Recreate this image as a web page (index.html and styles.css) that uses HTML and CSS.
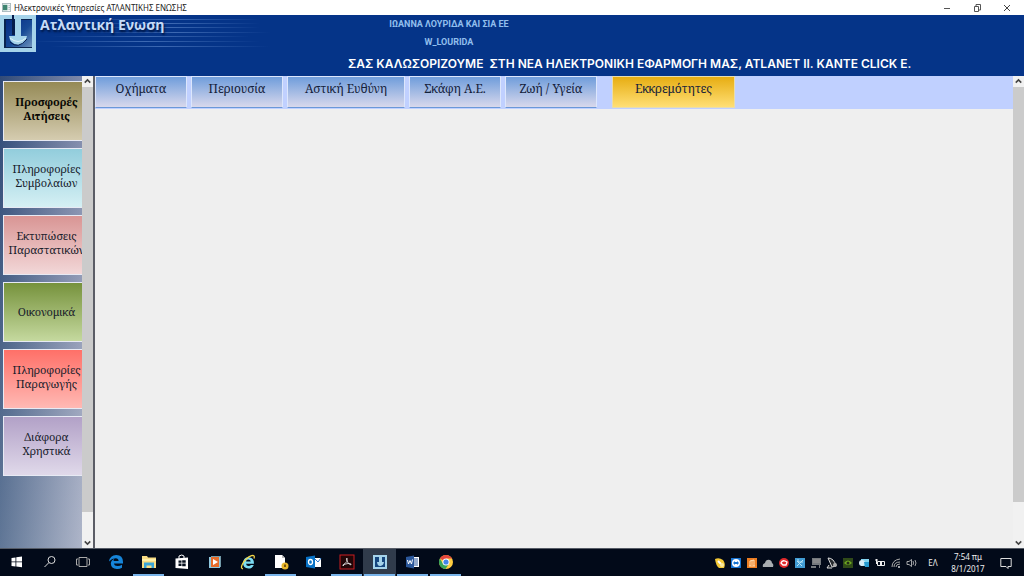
FILE: index.html
```html
<!DOCTYPE html>
<html lang="el">
<head>
<meta charset="utf-8">
<title>Ηλεκτρονικές Υπηρεσίες ΑΤΛΑΝΤΙΚΗΣ ΕΝΩΣΗΣ</title>
<link rel="stylesheet" href="styles.css">
</head>
<body>
<div class="titlebar">
  <svg class="app-icon" viewBox="0 0 10 10"><rect x=".5" y=".5" width="9" height="9" fill="#f4f8f8" stroke="#a9b9bd"/><rect x="1" y="2" width="5" height="6" fill="#3f8571"/><path d="M7 3h2M7 5h2M7 7h2" stroke="#a9b9bd"/></svg>
  <span class="window-title">Ηλεκτρονικές Υπηρεσίες ΑΤΛΑΝΤΙΚΗΣ ΕΝΩΣΗΣ</span>
  <button class="win-btn" aria-label="Ελαχιστοποίηση"><svg viewBox="0 0 10 10"><path d="M2 5.500h6" stroke="#555"/></svg></button>
  <button class="win-btn" aria-label="Επαναφορά"><svg viewBox="0 0 10 10"><path d="M2.500 3.500h4v5h-4zM4 3V1.500h4.500V7H7" fill="none" stroke="#555"/></svg></button>
  <button class="win-btn" aria-label="Κλείσιμο"><svg viewBox="0 0 10 10"><path d="M2 2l6 6M8 2l-6 6" stroke="#444"/></svg></button>
</div>

<header class="header">
  <div class="brand">
    <svg class="logo" viewBox="0 0 36 37">
      <defs><linearGradient id="lg" x1="0" y1="0" x2="1" y2="1"><stop offset="0" stop-color="#062b83"/><stop offset=".55" stop-color="#174a96"/><stop offset="1" stop-color="#6e93bd"/></linearGradient></defs>
      <rect width="36" height="37" fill="#a5d3ea"/>
      <rect x="4" y="4" width="28" height="29" fill="#0a2450"/>
      <rect x="6" y="5" width="26" height="27" fill="url(#lg)"/>
      <path d="M12 0h3v20h-3z" fill="#061c4c"/>
      <path d="M14 0h9v4h-2v17h6q-1 8-9 9-8-1-9-9h6V4h-1z" fill="#a5d3ea"/>
      <path d="M10 23q8 7 16 0" stroke="#dff3fa" fill="none"/>
      <path d="M10 27q8 8 17-3" stroke="#061c4c" fill="none"/>
    </svg>
    <span class="brand-name">Ατλαντική Ενωση</span>
    <svg class="streaks" viewBox="0 0 260 36" preserveAspectRatio="none">
      <defs><linearGradient id="st"><stop offset="0" stop-color="#547fc4" stop-opacity="0"/><stop offset=".5" stop-color="#547fc4" stop-opacity=".7"/><stop offset="1" stop-color="#547fc4" stop-opacity="0"/></linearGradient></defs>
      <g fill="url(#st)"><rect x="70" y="4" width="180" height="1"/><rect x="70" y="8" width="180" height="1"/><rect x="70" y="12" width="180" height="1"/><rect x="70" y="17" width="190" height="1"/><rect x="40" y="21" width="200" height="1"/><rect x="20" y="26" width="230" height="1"/><rect x="40" y="31" width="220" height="1"/></g>
    </svg>
  </div>
  <div class="welcome">
    <div class="account"><p>ΙΩΑΝΝΑ ΛΟΥΡΙΔΑ ΚΑΙ ΣΙΑ ΕΕ</p><p>W_LOURIDA</p></div>
    <p class="ticker">ΣΑΣ ΚΑΛΩΣΟΡΙΖΟΥΜΕ&nbsp; ΣΤΗ ΝΕΑ ΗΛΕΚΤΡΟΝΙΚΗ ΕΦΑΡΜΟΓΗ ΜΑΣ, ATLANET II. ΚΑΝΤΕ CLICK Ε.</p>
  </div>
</header>

<div class="workspace">
  <nav class="sidebar">
    <div class="side-list">
      <button class="side-btn khaki">Προσφορές<br>Αιτήσεις</button>
      <button class="side-btn cyan">Πληροφορίες<br>Συμβολαίων</button>
      <button class="side-btn rose">Εκτυπώσεις<br>Παραστατικών</button>
      <button class="side-btn green">Οικονομικά</button>
      <button class="side-btn red">Πληροφορίες<br>Παραγωγής</button>
      <button class="side-btn violet">Διάφορα<br>Χρηστικά</button>
    </div>
    <div class="scrollbar">
      <svg viewBox="0 0 10 10"><path d="M2.500 6L5 3.500 7.500 6" /></svg>
      <div class="thumb side-thumb"></div>
      <svg viewBox="0 0 10 10"><path d="M2.500 4L5 6.500 7.500 4" /></svg>
    </div>
  </nav>
  <main class="content">
    <div class="tabs">
      <button class="tab">Οχήματα</button>
      <button class="tab">Περιουσία</button>
      <button class="tab wide">Αστική Ευθύνη</button>
      <button class="tab">Σκάφη Α.Ε.</button>
      <button class="tab">Ζωή / Υγεία</button>
      <button class="tab pending">Εκκρεμότητες</button>
    </div>
  </main>
  <div class="scrollbar">
    <svg viewBox="0 0 10 10"><path d="M2.500 6L5 3.500 7.500 6" /></svg>
    <div class="thumb page-thumb"></div>
    <svg viewBox="0 0 10 10"><path d="M2.500 4L5 6.500 7.500 4" /></svg>
  </div>
</div>

<footer class="taskbar">
  <button class="task" aria-label="Έναρξη"><svg viewBox="0 0 16 16"><path d="M2.500 4l4-.6v4.100h-4zM7.300 3.300L13 2.500v5H7.300zM2.500 8.300h4v4.200l-4-.6zM7.300 8.300H13v5l-5.700-.8z" fill="#fff"/></svg></button>
  <button class="task" aria-label="Αναζήτηση"><svg viewBox="0 0 16 16"><circle cx="9.500" cy="6" r="3.500" fill="none" stroke="#ddd"/><path d="M7 8.500L2.500 13" stroke="#ddd"/></svg></button>
  <button class="task" aria-label="Προβολή εργασιών"><svg viewBox="0 0 16 16"><path d="M4 3.500h8v9H4zM3 5H1.500v6H3M13 5h1.500v6H13" fill="none" stroke="#aaa"/></svg></button>
  <button class="task" aria-label="Edge"><svg viewBox="0 0 16 16"><path d="M1 7.500Q2 1 8.200 1 15 1.200 15 8v1.500H6q.3 2.500 3.700 2.500 2.200 0 4.300-1.200v3Q11.500 15.200 8.800 15 3 14.500 2.800 9.500 3 6.300 6.200 4.700 5.500 5.600 5.600 7h5Q10.400 4.200 7.800 4.200 4 4.200 1 7.500z" fill="#1685d9"/></svg></button>
  <button class="task open" aria-label="Εξερεύνηση"><svg viewBox="0 0 16 16"><path d="M1 2h5l1 1.500h8V14H1z" fill="#f8dc83"/><path d="M1 5h14v2H1z" fill="#fff0a9"/><path d="M3 14V8.500h10V14h-2.500v-2.500h-5V14z" fill="#3aa5d8"/></svg></button>
  <button class="task" aria-label="Store"><svg viewBox="0 0 16 16"><path d="M1.500 4.500L14 3.500V15L1.500 14z" fill="#fff"/><path d="M5 5V2q3-2 5 0v3" fill="none" stroke="#fff"/><path d="M4.500 6.500h3v2.300h-3zM8.200 6.300h3.500v2.500H8.200zM4.500 9.500h3V12h-3zM8.200 9.500h3.500v2.700H8.200z" fill="#06101e"/></svg></button>
  <button class="task" aria-label="Media Player"><svg viewBox="0 0 16 16"><rect x="4" y="2" width="10" height="11" fill="#739ba9"/><rect x="2" y="3" width="11" height="11" fill="#8fc8df"/><rect x="4" y="3" width="8" height="10" fill="#e56c2b"/><path d="M6 5l5 3-5 3z" fill="#fff"/></svg></button>
  <button class="task" aria-label="Internet Explorer"><svg viewBox="0 0 16 16"><path d="M14 9.800H6q.3 2.200 2.700 2.200 1.500 0 2.200-1.100h2.900Q12.300 14.500 8.500 14.500 3 14.300 3 8.800 3.400 3.200 8.500 3.200q5.700.2 5.500 6.600zM6 7.400h4.800Q10.500 5.600 8.300 5.600T6 7.400z" fill="#7bdcf3"/><path d="M3 14.800Q.2 14.500 2.500 10 6 3.800 11.500 1.700q3.800-1 2.500 2.800" fill="none" stroke="#f3d548" stroke-width="1.300"/></svg></button>
  <button class="task open" aria-label="Έγγραφο"><svg viewBox="0 0 16 16"><path d="M2 1h7l3 3v10H2z" fill="#fff"/><path d="M9 1v3h3" fill="#bbb"/><circle cx="12" cy="12" r="3.500" fill="#e9b72d"/><path d="M11 10.500h2v2.500h-2z" fill="#7a5611"/></svg></button>
  <button class="task" aria-label="Outlook"><svg viewBox="0 0 16 16"><rect x="8" y="4" width="7" height="9" fill="#fff"/><path d="M8 4l4 4 3-4" fill="none" stroke="#2876ca"/><path d="M0 3l9-1.500v13L0 13z" fill="#0872c6"/><ellipse cx="4.500" cy="8" rx="2" ry="2.500" fill="none" stroke="#fff" stroke-width="1.300"/></svg></button>
  <button class="task open" aria-label="Acrobat"><svg viewBox="0 0 16 16"><rect x="1" y="1" width="14" height="14" fill="#210608" stroke="#c91c20"/><path d="M8 4q-1 0 0 3t4 4q1-1.700-3-1.500T4 12q-1-1 2-2.500T8 4z" fill="none" stroke="#eee" stroke-width=".8"/></svg></button>
  <button class="task open active" aria-label="Ατλαντική Ένωση"><svg viewBox="0 0 16 16"><rect x="1" y="1" width="14" height="14" fill="#a5d3ea"/><path d="M3 3h10v10H3z" fill="#16467e"/><path d="M7 1h3v7h2q-.5 3.500-3.500 4T5 8h2z" fill="#a5d3ea"/></svg></button>
  <button class="task open" aria-label="Word"><svg viewBox="0 0 16 16"><path d="M8 3h6v10H8z" fill="#fff"/><path d="M9 5h4M9 7h4M9 9h4M9 11h4" stroke="#2b579a"/><path d="M1 3l8-1.500v13L1 13z" fill="#2b579a"/><path d="M2.500 6l1 4L5 6.500 6.500 10l1-4.500" fill="none" stroke="#fff"/></svg></button>
  <button class="task open" aria-label="Chrome"><svg viewBox="0 0 16 16"><circle cx="8" cy="8" r="7" fill="#ffcd40"/><path d="M8 8L1.900 4.500A7 7 0 0 1 14.100 4.500H8z" fill="#e5463c"/><path d="M1.900 4.500A7 7 0 0 0 7.500 15L11 9.700 8 8 5 9.700z" fill="#36a45b"/><circle cx="8" cy="8" r="3.500" fill="#fff"/><circle cx="8" cy="8" r="2.600" fill="#4285e8"/></svg></button>

  <div class="tray">
    <svg viewBox="0 0 12 12"><path d="M1 2q4-2 8 1 3 4 1 8H5Q2 9 1 2z" fill="#f4c936"/><path d="M4 4l3 3" stroke="#fff" stroke-width="2"/><circle cx="8" cy="8" r="2" fill="#f8e8a0"/></svg>
    <svg viewBox="0 0 12 12"><rect x="1" y="1" width="10" height="10" fill="#1974d1"/><circle cx="6" cy="6" r="4" fill="#fff"/><path d="M3 6l2-2v1h2V4l2 2-2 2V7H5v1z" fill="#1974d1"/></svg>
    <svg viewBox="0 0 12 12"><rect x="1" y="1" width="10" height="10" fill="#ec7d22"/><path d="M4 9V4l4-1v6M3 9h6M6 4v4" fill="none" stroke="#ffe1b7"/></svg>
    <svg viewBox="0 0 12 12"><path d="M1 10Q0 7 3 6q1-4 5-3 2 1 2 3 2 1 1 4z" fill="#a8adb1"/></svg>
    <svg viewBox="0 0 12 12"><circle cx="6" cy="6" r="5" fill="#df292b"/><path d="M3 6q1-3 4-2l2 1-1 3H5z" fill="none" stroke="#fff" stroke-width="1.300"/></svg>
    <svg viewBox="0 0 12 12"><rect x="1" y="1" width="10" height="10" fill="#419dd5"/><path d="M3 9l6-6M3 4l5 5M4 2v3h5" stroke="#b6e4f5" fill="none"/></svg>
    <svg viewBox="0 0 12 12"><path d="M2 1h9v7H2zM1 9h5v2H1zM9 8h1v3H9z" fill="#74797d"/><path d="M3 3h7M3 5h7" stroke="#999"/></svg>
    <svg viewBox="0 0 12 12"><path d="M2 1q6 0 8 8l-4 1zM3 8l-2 3h5" fill="#282c30" stroke="#ddd"/><circle cx="9" cy="8" r="2" fill="#aaa"/></svg>
    <svg viewBox="0 0 12 12"><rect x="1" y="1" width="10" height="10" fill="#2f4a18"/><path d="M2 6q4-5 8 0-4 4-8 0z" fill="#70aa22"/><circle cx="6" cy="6" r="1.500" fill="#222b17"/></svg>
    <svg viewBox="0 0 12 12"><rect x="3" y="2" width="8" height="7" fill="#83d4ef"/><circle cx="4" cy="6" r="3" fill="#d7edf6"/><path d="M6 5h5v5H7z" fill="#269bd1"/></svg>
    <svg viewBox="0 0 12 12"><path d="M3.500 4.500h7v4h-7z" fill="none" stroke="#eee"/><path d="M6 5h2v3H6z" fill="#eee"/><path d="M1 3h3M2.500 2v5" stroke="#eee"/></svg>
    <svg viewBox="0 0 12 12"><path d="M2 10Q2 3 10 2M4 10q0-5 6-5M6 10q0-3 4-3" fill="none" stroke="#aaa"/><circle cx="9" cy="10" r="1" fill="#ddd"/></svg>
    <svg viewBox="0 0 12 12"><path d="M1 4.500h2l2.500-2v7L3 7.500H1zM7 4q1 2 0 4M9 3q2 3 0 6" fill="none" stroke="#ccc" stroke-width=".8"/></svg>
  </div>
  <span class="lang">ΕΛ</span>
  <div class="clock"><span>7:54 πμ</span><span>8/1/2017</span></div>
  <button class="notice" aria-label="Ειδοποιήσεις"><svg viewBox="0 0 12 12"><path d="M.8 1.500h10.400v8H8v2l-2-2H.8z" fill="none" stroke="#ddd"/></svg></button>
</footer>
</body>
</html>
```

FILE: styles.css
```css
* { box-sizing: border-box; }
body {
  margin: 0;
  height: 100vh;
  display: flex;
  flex-direction: column;
  overflow: hidden;
  font-family: "Open Sans", sans-serif;
  background: #efefef;
}
p { margin: 0; }
button { border: 0; padding: 0; margin: 0; background: none; font: inherit; }
svg { display: block; flex: none; }

.titlebar { flex: none; display: flex; align-items: center; height: 15px; padding-left: 2px; background: #fff; color: #222; }
.app-icon { width: 9px; height: 9px; }
.window-title { flex: 1; padding-left: 3px; font: 8px/14px "Noto Sans", sans-serif; }
.win-btn { width: 30px; height: 15px; display: grid; place-items: center; }
.win-btn:last-child { margin-right: 2px; }
.win-btn svg { width: 10px; height: 10px; }

.header { flex: none; display: flex; height: 61px; background: #053488; overflow: hidden; }
.brand { position: relative; flex: none; display: flex; width: 348px; }
.logo { width: 36px; height: 37px; z-index: 1; }
.brand-name { z-index: 1; padding-left: 4px; font: bold 14px/20px "Open Sans", sans-serif; color: #c6dcf8; text-shadow: 1px 2px 2px #001743; }
.streaks { position: absolute; left: 10px; top: 0; width: 260px; height: 36px; }
.welcome { flex: 1; white-space: nowrap; }
.account { width: 202px; text-align: center; font: bold 9px/18px Roboto, sans-serif; color: #91bfed; }
.ticker { padding-top: 4px; font: 600 12px/18px Inter, sans-serif; color: #fff; }

.workspace { flex: 1; min-height: 0; display: flex; border-bottom: 1px solid #555b66; }
.sidebar { flex: none; display: flex; width: 95px; border-right: 2px solid #5b5d66; background: linear-gradient(90deg, #3e5780, #c3c2d6 90%); }
.side-list { flex: 1; min-width: 0; display: flex; flex-direction: column; gap: 7px; padding: 5px 0 0 3px; overflow: hidden; background: linear-gradient(#1c386b66, #93a6b866); }
.side-btn { flex: none; width: 87px; height: 60px; padding-bottom: 5px; border: 1px solid #e7eaf4; font: 11px/14px "Noto Serif", "Droid Serif", "Liberation Serif", serif; color: #17202b; white-space: nowrap; }
.khaki { background: linear-gradient(#958a56, #d5ccb0); color: #080804; font-weight: bold; }
.cyan { background: linear-gradient(#92cddc, #d5f0f4); }
.rose { background: linear-gradient(#d99594, #f2d7d8); }
.green { padding-bottom: 0; background: linear-gradient(#76923c, #c5d99f); }
.red { background: linear-gradient(#ff7068, #ffb9b4); }
.violet { background: linear-gradient(#b2a1c7, #e0d9ea); }

.scrollbar { flex: none; display: flex; flex-direction: column; width: 11px; background: #f1f1f1; }
.scrollbar svg { width: 11px; height: 11px; }
.scrollbar path { fill: none; stroke: #444; stroke-width: 1.4; }
.thumb { background: #cbcbcb; margin-bottom: auto; }
.side-thumb { height: 90%; }
.page-thumb { height: 88%; }

.content { flex: 1; min-width: 0; }
.tabs { display: flex; gap: 4px; height: 33px; background: #c0d0ff; }
.tab { width: 92px; height: 32px; padding-bottom: 6px; border: 1px solid #dce6fc; border-bottom-color: #6b98d8; background: linear-gradient(#6f9ddb, #d8d8ec); font: 12px/16px "Noto Serif", "Droid Serif", "Liberation Serif", serif; color: #14213a; white-space: nowrap; }
.wide { width: 118px; }
.pending { width: 123px; margin-left: 11px; border-color: #e8dcae; background: linear-gradient(#e7ad12, #ffdf75); }

.taskbar { flex: none; display: flex; align-items: center; height: 27px; background: #020a19; color: #eee; }
.task { width: 33px; height: 27px; display: grid; place-items: center; border-bottom: 2px solid transparent; }
.task svg { width: 16px; height: 16px; }
.open { border-image: linear-gradient(90deg, transparent 3px, #79b4ea 3px, #79b4ea 30px, transparent 30px) 2; border-bottom: 2px solid; }
.active { background: #303b4b; }
.tray { display: flex; gap: 4px; margin-left: auto; }
.tray svg { width: 12px; height: 12px; }
.lang { width: 30px; text-align: center; font: 8px/12px "Noto Sans", sans-serif; }
.clock { display: flex; flex-direction: column; width: 40px; text-align: center; font: 8px/12px "Noto Sans", sans-serif; white-space: nowrap; }
.notice { width: 36px; display: grid; place-items: center; }
.notice svg { width: 12px; height: 12px; }
```
